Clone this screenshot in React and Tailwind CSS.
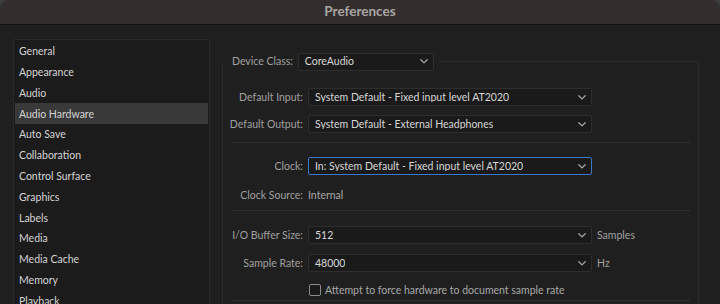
const sections = [
  "General",
  "Appearance",
  "Audio",
  "Audio Hardware",
  "Auto Save",
  "Collaboration",
  "Control Surface",
  "Graphics",
  "Labels",
  "Media",
  "Media Cache",
  "Memory",
  "Playback"
];

function Chevron() {
  return (
    <svg width="8" height="5" viewBox="0 0 8 5" fill="none" className="shrink-0">
      <path d="M0.8 0.8 L4 3.9 L7.2 0.8" stroke="#a6a6a6" strokeWidth="1.3" strokeLinecap="round" strokeLinejoin="round" />
    </svg>
  );
}

function Combo({ value, width, focused }) {
  return (
    <div
      className={`flex h-[18px] items-center justify-between rounded-[2px] border bg-[#1a1a1a] pl-[6px] pr-[5px] text-[#d6d6d6] ${focused ? "border-[#3a78c9]" : "border-[#2e2e2e]"} ${width}`}
    >
      <span className="truncate">{value}</span>
      <Chevron />
    </div>
  );
}

function Row({ label, children, className = "" }) {
  return (
    <div className={`flex items-center ${className}`}>
      <div className="w-[80px] shrink-0 text-right text-[#a0a0a0]">{label}</div>
      <div className="ml-[5px] flex items-center">{children}</div>
    </div>
  );
}

function Divider({ className = "" }) {
  return <div className={`ml-[9px] mr-[8px] h-px bg-[#2e2e2e] ${className}`} />;
}

export default function App() {
  return (
    <div className="h-[304px] w-[720px] overflow-hidden bg-[#3c3c3c] font-['Lato',sans-serif] text-[10.5px] leading-none">
      <div className="flex h-full flex-col overflow-hidden rounded-t-[10px] bg-[#1f1f1f]">
        <header className="flex h-[25px] shrink-0 items-center justify-center border-b border-[#121212] bg-[#332d2d]">
          <span className="text-[13.5px] font-bold text-[#aaa5a5]">Preferences</span>
        </header>

        <div className="flex flex-1 pl-[13px] pt-[14px]">
          <aside className="h-[280px] w-[197px] shrink-0 rounded-[2px] border border-[#2a2a2a] bg-[#1b1b1b] px-px pt-px">
            {sections.map((name) => (
              <div
                key={name}
                className={`flex h-[20.8px] items-center pl-[4px] text-[#d4d4d4] ${name === "Audio Hardware" ? "bg-[#393939]" : ""}`}
              >
                {name}
              </div>
            ))}
          </aside>

          <fieldset className="ml-[12px] mt-[13px] h-[290px] w-[477px] rounded-[3px] border border-[#2c2c2c]">
            <legend className="-mt-px flex h-[19px] items-center">
              <span className="ml-[9px] text-[#a0a0a0]">Device Class:</span>
              <div className="ml-[5px] mr-[4px]">
                <Combo value="CoreAudio" width="w-[136px]" />
              </div>
            </legend>

            <Row label="Default Input:" className="mt-[17px]">
              <Combo value="System Default - Fixed input level AT2020" width="w-[284px]" />
            </Row>
            <Row label="Default Output:" className="mt-[9px]">
              <Combo value="System Default - External Headphones" width="w-[284px]" />
            </Row>

            <Divider className="mt-[9px]" />

            <Row label="Clock:" className="mt-[14px]">
              <Combo value="In: System Default - Fixed input level AT2020" width="w-[284px]" focused />
            </Row>
            <Row label="Clock Source:" className="mt-[11px] h-[18px]">
              <span className="text-[#a8a8a8]">Internal</span>
            </Row>

            <Divider className="mt-[6px]" />

            <Row label="I/O Buffer Size:" className="mt-[15px]">
              <Combo value="512" width="w-[284px]" />
              <span className="ml-[5px] text-[#a0a0a0]">Samples</span>
            </Row>
            <Row label="Sample Rate:" className="mt-[10px]">
              <Combo value="48000" width="w-[284px]" />
              <span className="ml-[5px] text-[#a0a0a0]">Hz</span>
            </Row>

            <div className="mt-[11px] flex h-[14px] items-center pl-[85px]">
              <div className="ml-px h-[12px] w-[12px] rounded-[2px] border border-[#8a8a8a] bg-[#1a1a1a]" />
              <span className="ml-[4px] text-[#a8a8a8]">Attempt to force hardware to document sample rate</span>
            </div>

            <Divider className="mt-[3px]" />
          </fieldset>
        </div>
      </div>
    </div>
  );
}
